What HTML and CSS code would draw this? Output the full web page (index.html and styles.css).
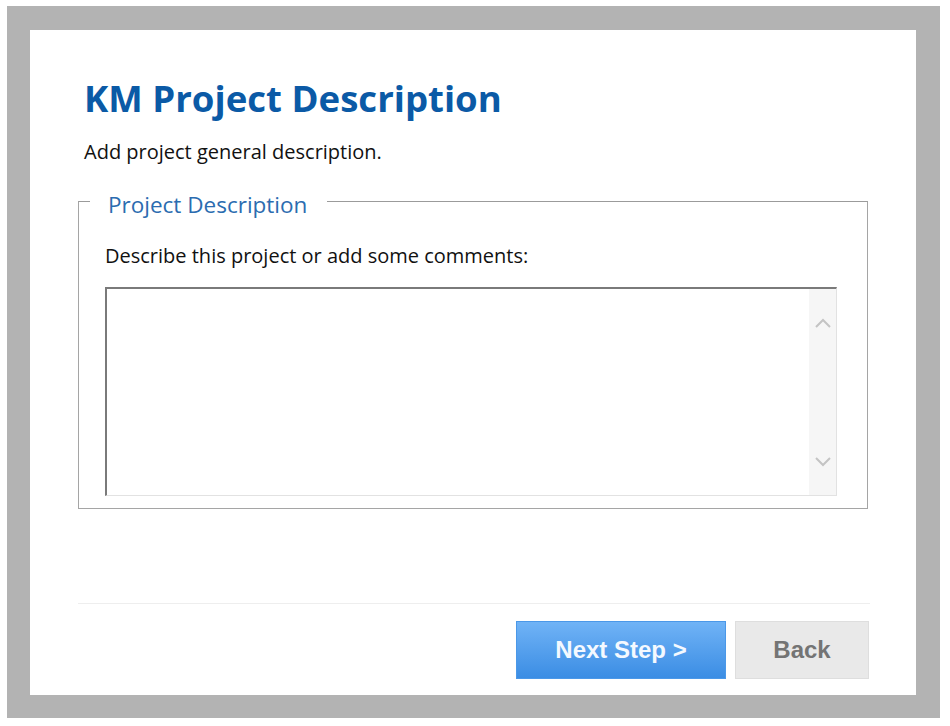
FILE: index.html
```html
<!DOCTYPE html>
<html lang="en">
<head>
    <meta charset="UTF-8">
    <title>KM Project Description</title>
    <link rel="stylesheet" href="styles.css">
</head>
<body>
    <div class="frame">
        <div class="panel">
            <h1 class="title">KM Project Description</h1>
            <p class="intro">Add project general description.</p>

            <fieldset class="group">
                <legend>Project Description</legend>
                <label class="prompt" for="desc">Describe this project or add some comments:</label>
                <div class="memo">
                    <textarea id="desc"></textarea>
                    <div class="scroll">
                        <svg width="20" height="12" viewBox="0 0 20 12"><path d="M3 10 L10 3 L17 10" fill="none" stroke="#c4c4c4" stroke-width="2"/></svg>
                        <svg width="20" height="12" viewBox="0 0 20 12"><path d="M3 2 L10 9 L17 2" fill="none" stroke="#c4c4c4" stroke-width="2"/></svg>
                    </div>
                </div>
            </fieldset>

            <footer class="actions">
                <button class="next-button">Next Step &gt;</button>
                <button class="back-button">Back</button>
            </footer>
        </div>
    </div>
</body>
</html>
```

FILE: styles.css
```css
body {
    margin: 0;
    background: #fff;
    font-family: "Open Sans", "Noto Sans", sans-serif;
}

.frame {
    margin: 6px 10px 8px 7px;
    padding: 24px 24px 23px 23px;
    background: #b3b3b3;
}

.panel {
    height: 665px;
    background: #fff;
    box-sizing: border-box;
    padding: 46px 46px 0 48px;
    display: flex;
    flex-direction: column;
}

.title {
    margin: 0 0 0 6px;
    font-size: 36.6px;
    line-height: 44px;
    font-weight: 700;
    color: #0b5aa6;
}

.intro {
    margin: 19px 0 0 6px;
    font-size: 20px;
    line-height: 26px;
    color: #111;
}

.group {
    margin: 18px 2px 0 0;
    padding: 24px 30px 12px 26px;
    border: 1px solid #a5a5a5;
    border-top-color: #9b9b9b;
}

.group legend {
    margin-left: -15px;
    padding: 8px 20px 0 18px;
    font-size: 22.5px;
    line-height: 28px;
    color: #2b6cb0;
}

.prompt {
    display: block;
    font-size: 20px;
    line-height: 26px;
    color: #111;
}

.memo {
    margin-top: 18px;
    height: 209px;
    display: flex;
    box-sizing: border-box;
    border-top: 2px solid #7a7a7a;
    border-left: 2px solid #7a7a7a;
    border-right: 1px solid #e2e2e2;
    border-bottom: 1px solid #e2e2e2;
}

.memo textarea {
    flex: 1;
    border: none;
    resize: none;
    outline: none;
    margin: 0;
    padding: 4px;
}

.scroll {
    width: 27px;
    background: #f6f6f6;
    display: flex;
    flex-direction: column;
    justify-content: space-between;
    align-items: center;
    padding: 28px 0 27px;
}

.actions {
    margin-top: auto;
    margin-bottom: 16px;
    border-top: 1px solid #eeeeee;
    padding: 17px 1px 0 0;
    display: flex;
    justify-content: flex-end;
    gap: 9px;
}

.actions button {
    height: 58px;
    border: none;
    font-family: "Liberation Sans", Arial, sans-serif;
    font-weight: 700;
    font-size: 24px;
    cursor: pointer;
}

.next-button {
    width: 210px;
    color: #f4f9ff;
    background: linear-gradient(#70b3f6, #3b8de4);
    border: 1px solid #4b98e8 !important;
}

.back-button {
    width: 134px;
    color: #747474;
    background: #e9e9e9;
    border: 1px solid #dedede !important;
}
```
